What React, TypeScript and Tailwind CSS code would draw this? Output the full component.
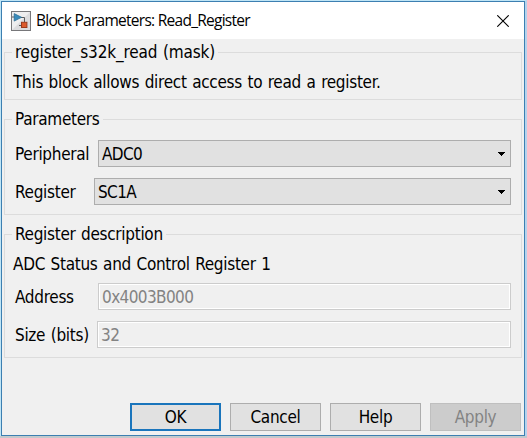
import type { ReactNode } from "react";

function BlockIcon() {
  return (
    <svg className="h-5 w-5 shrink-0" viewBox="0 0 20 20">
      <rect x="0.5" y="0.5" width="19" height="19" fill="#dcdcde" stroke="#77777a" />
      <path d="M1 1h18L1 19z" fill="#eeeeef" />
      <path d="M1 6h3M10 6.5h3.5V11M8 14.5h3" fill="none" stroke="#5b5b5d" strokeWidth="1" />
      <path d="M3.2 2.6l7.4 3.7-7.4 3.8z" fill="#3a8cbc" stroke="#26688f" strokeWidth="0.7" />
      <rect x="10.5" y="11.3" width="5.4" height="5.2" fill="#dc5a2c" stroke="#9b3a1c" />
    </svg>
  );
}

function Group({ title, titleWidth, className, children }: { title: string; titleWidth: string; className: string; children: ReactNode }) {
  return (
    <fieldset className={`min-w-0 border border-[#dcdcdc] ${className}`}>
      <legend className={`ml-[7px] h-[22px] pl-[3px] leading-[22px] whitespace-nowrap ${titleWidth}`}>{title}</legend>
      {children}
    </fieldset>
  );
}

function Field({ label, labelWidth, children }: { label: string; labelWidth: string; children: ReactNode }) {
  return (
    <div className="flex h-[27px] items-center pr-[10px] pl-[10px]">
      <label className={`shrink-0 whitespace-nowrap ${labelWidth}`}>{label}</label>
      {children}
    </div>
  );
}

function Select({ value }: { value: string }) {
  return (
    <div className="flex h-[27px] flex-1 items-center justify-between border border-[#adadad] bg-[#e1e1e1] pr-[5px] pl-[3px] tracking-[-0.6px]">
      <span>{value}</span>
      <svg className="h-1 w-[7px]" viewBox="0 0 7 4" shapeRendering="crispEdges">
        <path d="M0 0h7v1H6v1H5v1H4v1H3V3H2V2H1V1H0z" fill="#000" />
      </svg>
    </div>
  );
}

function Input({ value }: { value: string }) {
  return (
    <div className="flex h-[27px] flex-1 items-center border border-[#cccccc] pl-[3px] tracking-[-0.6px] text-[#838383] inset-ring inset-ring-white">
      {value}
    </div>
  );
}

function Button({ label, className }: { label: string; className: string }) {
  return <button className={`h-7 w-[91px] ${className}`}>{label}</button>;
}

export default function App() {
  return (
    <div className="h-[438px] w-[527px] overflow-hidden bg-[#c3c9cc] font-['DejaVu_Sans_Condensed','DejaVu_Sans',sans-serif] text-[17px] leading-5 tracking-[-0.3px] [word-spacing:1px] text-black">
      <div className="h-[436px] border-t border-r-2 border-l border-t-[#bfe5f6] border-r-[#b5d3ed] border-l-[#bfe5f6]">
        <div className="flex h-[435px] flex-col border border-[#3c7fb1] bg-[#f0f0f0]">
          <header className="flex h-[37px] shrink-0 items-center bg-white pr-[15px] pl-[9px] font-['Open_Sans',sans-serif] text-[15.5px] tracking-[-0.73px] [word-spacing:0px]">
            <BlockIcon />
            <h1 className="ml-[5px] flex-1 pb-[2px] whitespace-nowrap">Block Parameters: Read_Register</h1>
            <svg className="h-3 w-3" viewBox="0 0 12 12">
              <path d="M0.3 0.3l11.4 11.4M11.7 0.3L0.3 11.7" stroke="#000" strokeWidth="1.1" />
            </svg>
          </header>
          <main className="flex flex-col pt-[2px] pr-[2px] pl-[2px]">
            <Group title="register_s32k_read (mask)" titleWidth="w-[206px] tracking-[-0.15px]" className="h-[59px]">
              <p className="mt-[9px] pl-[8px] whitespace-nowrap">This block allows direct access to read a register.</p>
            </Group>
            <Group title="Parameters" titleWidth="w-[91px]" className="mt-[8px] h-[107px]">
              <div className="flex flex-col gap-[11px] pt-[10px]">
                <Field label="Peripheral" labelWidth="w-[83px]">
                  <Select value="ADC0" />
                </Field>
                <Field label="Register" labelWidth="w-[79px]">
                  <Select value="SC1A" />
                </Field>
              </div>
            </Group>
            <Group title="Register description" titleWidth="w-[154px]" className="mt-[8px] h-[135px]">
              <p className="mt-[9px] mb-[9px] pl-[8px] whitespace-nowrap">ADC Status and Control Register 1</p>
              <div className="flex flex-col gap-[11px]">
                <Field label="Address" labelWidth="w-[83px]">
                  <Input value="0x4003B000" />
                </Field>
                <Field label="Size (bits)" labelWidth="w-[82px]">
                  <Input value="32" />
                </Field>
              </div>
            </Group>
          </main>
          <footer className="mt-auto flex justify-end gap-[9px] pr-[3px] pb-[4px]">
            <Button label="OK" className="border-2 border-[#1a75bc] bg-[#e1e1e1]" />
            <Button label="Cancel" className="border border-[#adadad] bg-[#e1e1e1]" />
            <Button label="Help" className="border border-[#adadad] bg-[#e1e1e1]" />
            <Button label="Apply" className="border border-[#bfbfbf] bg-[#cccccc] text-[#838383]" />
          </footer>
        </div>
      </div>
    </div>
  );
}
